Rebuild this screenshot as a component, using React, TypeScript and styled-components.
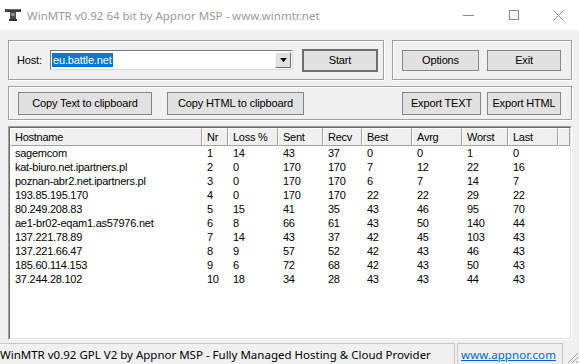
import React from 'react';
import styled, { createGlobalStyle } from 'styled-components';

const Global = createGlobalStyle`
  html, body { margin: 0; padding: 0; background: #f0f0f0; }
  body { width: 579px; height: 364px; overflow: hidden; }
`;

const SYS = '"Liberation Sans", Arial, sans-serif';
const UI = '"Noto Sans", "Open Sans", sans-serif';

const Window = styled.div`
  width: 579px;
  height: 364px;
  display: flex;
  flex-direction: column;
  background: #f0f0f0;
  font-family: ${SYS};
  font-size: 11px;
  letter-spacing: -0.15px;
  color: #000;
  overflow: hidden;
`;

const TitleBar = styled.div`
  height: 30px;
  flex: none;
  background: #fff;
  display: flex;
  align-items: center;
  padding-left: 5px;
  letter-spacing: 0;
`;

const TitleText = styled.span`
  flex: 1;
  margin-left: 6px;
  font-family: ${UI};
  font-size: 11.5px;
  color: #9a9a9a;
  white-space: nowrap;
`;

const Controls = styled.div`
  display: flex;
  height: 100%;
  margin-right: -2px;
`;

const CtrlBtn = styled.div`
  width: 45px;
  height: 100%;
  display: flex;
  align-items: center;
  justify-content: center;
`;

const Content = styled.div`
  flex: 1;
  display: flex;
  flex-direction: column;
  padding: 10px 7px 0 8px;
  min-height: 0;
`;

const TopRow = styled.div`
  display: flex;
  gap: 8px;
  height: 40px;
`;

const GroupBox = styled.div<{ $w?: number; $pl: number; $pr?: number }>`
  box-sizing: border-box;
  ${(p) => (p.$w ? `width: ${p.$w}px;` : 'flex: 1;')}
  height: 100%;
  border: 1px solid #a0a0a0;
  box-shadow: inset 1px 1px 0 #fff, 1px 1px 0 #fff;
  display: flex;
  align-items: center;
  padding-left: ${(p) => p.$pl}px;
  padding-right: ${(p) => p.$pr ?? 0}px;
`;

const SecondRow = styled.div`
  margin-top: 6px;
  height: 34px;
  display: flex;
`;

const Label = styled.span`
  width: 33px;
  flex: none;
`;

const Combo = styled.div`
  box-sizing: border-box;
  width: 243px;
  height: 20px;
  background: #fff;
  border: 1px solid #7a7a7a;
  border-right-color: #d8d8d8;
  border-bottom-color: #d8d8d8;
  display: flex;
  align-items: center;
  padding: 0 1px 0 1px;
`;

const ComboText = styled.div`
  flex: 1;
  display: flex;
  align-items: center;
  height: 100%;
`;

const Selected = styled.span`
  background: #0078d7;
  color: #fff;
  line-height: 14px;
  padding: 0 1px;
`;

const DropBtn = styled.div`
  box-sizing: border-box;
  width: 16px;
  height: 16px;
  background: #e1e1e1;
  border: 1px solid #f6f6f6;
  border-right-color: #6a6a6a;
  border-bottom-color: #6a6a6a;
  display: flex;
  align-items: center;
  justify-content: center;
`;

const Button = styled.div<{ $w: number; $h: number; $default?: boolean; $ml?: number }>`
  box-sizing: border-box;
  flex: none;
  width: ${(p) => p.$w}px;
  height: ${(p) => p.$h}px;
  margin-left: ${(p) => p.$ml ?? 0}px;
  background: #e1e1e1;
  border: ${(p) => (p.$default ? '2px solid #6e6e6e' : '1px solid #868686')};
  display: flex;
  align-items: center;
  justify-content: center;
  white-space: nowrap;
  padding-bottom: 1px;
`;

const Spacer = styled.div`
  flex: 1;
`;

const ListOuter = styled.div`
  margin-top: 6px;
  height: 214px;
  box-sizing: border-box;
  border: 1px solid #a0a0a0;
  border-right-color: #fff;
  border-bottom-color: #fff;
  flex: none;
`;

const ListInner = styled.div`
  height: 100%;
  box-sizing: border-box;
  border: 1px solid #696969;
  border-right-color: #e3e3e3;
  border-bottom-color: #e3e3e3;
  background: #fff;
  overflow: hidden;
  letter-spacing: -0.25px;
`;

const COLS = '192px 26px 50px 45px 39px 50px 50px 46px 50px 1fr';

const Header = styled.div`
  display: grid;
  grid-template-columns: ${COLS};
  height: 18px;
`;

const HeadCell = styled.div`
  box-sizing: border-box;
  background: #f0f0f0;
  border-top: 1px solid #fff;
  border-left: 1px solid #fff;
  border-right: 1px solid #a0a0a0;
  border-bottom: 1px solid #a0a0a0;
  padding-left: 4px;
  display: flex;
  align-items: center;
  white-space: nowrap;
  overflow: hidden;
`;

const Row = styled.div`
  display: grid;
  grid-template-columns: ${COLS};
  height: 14px;
  line-height: 14px;
`;

const Cell = styled.div`
  padding-left: 5px;
  white-space: nowrap;
  overflow: hidden;
`;

const StatusBar = styled.div`
  flex: none;
  height: 21px;
  margin-top: 2px;
  display: flex;
  font-family: ${UI};
  font-size: 11.5px;
  letter-spacing: 0;
`;

const Panel = styled.div<{ $w: number; $ml?: number }>`
  box-sizing: border-box;
  width: ${(p) => p.$w}px;
  margin-left: ${(p) => p.$ml ?? 0}px;
  border-top: 1px solid #c8c8c8;
  border-right: 1px solid #c8c8c8;
  border-left: ${(p) => (p.$ml ? '1px solid #c8c8c8' : 'none')};
  display: flex;
  align-items: center;
  padding-left: ${(p) => (p.$ml ? 3 : 0)}px;
  padding-top: 1px;
  white-space: nowrap;
  overflow: hidden;
`;

const Link = styled.span`
  color: #0066cc;
  text-decoration: underline;
  letter-spacing: 0.1px;
`;

const Grip = styled.div`
  flex: 1;
  display: flex;
  align-items: flex-end;
  justify-content: flex-end;
`;

const rows: (string | number)[][] = [
  ['sagemcom', 1, 14, 43, 37, 0, 0, 1, 0],
  ['kat-biuro.net.ipartners.pl', 2, 0, 170, 170, 7, 12, 22, 16],
  ['poznan-abr2.net.ipartners.pl', 3, 0, 170, 170, 6, 7, 14, 7],
  ['193.85.195.170', 4, 0, 170, 170, 22, 22, 29, 22],
  ['80.249.208.83', 5, 15, 41, 35, 43, 46, 95, 70],
  ['ae1-br02-eqam1.as57976.net', 6, 8, 66, 61, 43, 50, 140, 44],
  ['137.221.78.89', 7, 14, 43, 37, 42, 45, 103, 43],
  ['137.221.66.47', 8, 9, 57, 52, 42, 43, 46, 43],
  ['185.60.114.153', 9, 6, 72, 68, 42, 43, 50, 43],
  ['37.244.28.102', 10, 18, 34, 28, 43, 43, 44, 43],
];

const headers = ['Hostname', 'Nr', 'Loss %', 'Sent', 'Recv', 'Best', 'Avrg', 'Worst', 'Last', ''];

export default function App() {
  return (
    <Window>
      <Global />
      <TitleBar>
        <svg width="16" height="14" viewBox="0 0 16 14">
          <rect x="0" y="1" width="16" height="3" fill="#3b3b3b" />
          <rect x="1" y="1" width="14" height="1" fill="#6a6a6a" />
          <rect x="5" y="4" width="6" height="9" fill="#4a4a4a" />
          <rect x="6" y="5" width="4" height="3" fill="#8a8a8a" />
          <rect x="4" y="11" width="8" height="2" fill="#2e2e2e" />
        </svg>
        <TitleText>WinMTR v0.92 64 bit by Appnor MSP - www.winmtr.net</TitleText>
        <Controls>
          <CtrlBtn>
            <svg width="11" height="10" viewBox="0 0 11 10">
              <rect x="0" y="5" width="11" height="1" fill="#8a8a8a" />
            </svg>
          </CtrlBtn>
          <CtrlBtn>
            <svg width="10" height="10" viewBox="0 0 10 10">
              <rect x="0.5" y="0.5" width="9" height="9" fill="none" stroke="#8a8a8a" />
            </svg>
          </CtrlBtn>
          <CtrlBtn>
            <svg width="11" height="11" viewBox="0 0 11 11">
              <path d="M0.5 0.5 L10.5 10.5 M10.5 0.5 L0.5 10.5" stroke="#8a8a8a" strokeWidth="1" />
            </svg>
          </CtrlBtn>
        </Controls>
      </TitleBar>
      <Content>
        <TopRow>
          <GroupBox $w={376} $pl={8}>
            <Label>Host:</Label>
            <Combo>
              <ComboText>
                <Selected>eu.battle.net</Selected>
              </ComboText>
              <DropBtn>
                <svg width="7" height="4" viewBox="0 0 7 4">
                  <path d="M0 0 H7 L3.5 4 Z" fill="#000" />
                </svg>
              </DropBtn>
            </Combo>
            <Button $w={76} $h={23} $default $ml={9}>Start</Button>
          </GroupBox>
          <GroupBox $pl={9}>
            <Button $w={77} $h={21}>Options</Button>
            <Button $w={74} $h={21} $ml={8}>Exit</Button>
          </GroupBox>
        </TopRow>
        <SecondRow>
          <GroupBox $pl={9} $pr={10}>
            <Button $w={134} $h={23}>Copy Text to clipboard</Button>
            <Button $w={137} $h={23} $ml={15}>Copy HTML to clipboard</Button>
            <Spacer />
            <Button $w={79} $h={23}>Export TEXT</Button>
            <Button $w={74} $h={23} $ml={6}>Export HTML</Button>
          </GroupBox>
        </SecondRow>
        <ListOuter>
          <ListInner>
            <Header>
              {headers.map((h, i) => (
                <HeadCell key={i}>{h}</HeadCell>
              ))}
            </Header>
            {rows.map((r, i) => (
              <Row key={i}>
                {r.map((v, j) => (
                  <Cell key={j}>{v}</Cell>
                ))}
                <Cell />
              </Row>
            ))}
          </ListInner>
        </ListOuter>
      </Content>
      <StatusBar>
        <Panel $w={455}>WinMTR v0.92 GPL V2 by Appnor MSP - Fully Managed Hosting &amp; Cloud Provider</Panel>
        <Panel $w={106} $ml={2}>
          <Link>www.appnor.com</Link>
        </Panel>
        <Grip>
          <svg width="13" height="13" viewBox="0 0 13 13">
            <path d="M12 2 L2 12 M12 6 L6 12 M12 10 L10 12" stroke="#a0a0a0" strokeWidth="1" />
          </svg>
        </Grip>
      </StatusBar>
    </Window>
  );
}
